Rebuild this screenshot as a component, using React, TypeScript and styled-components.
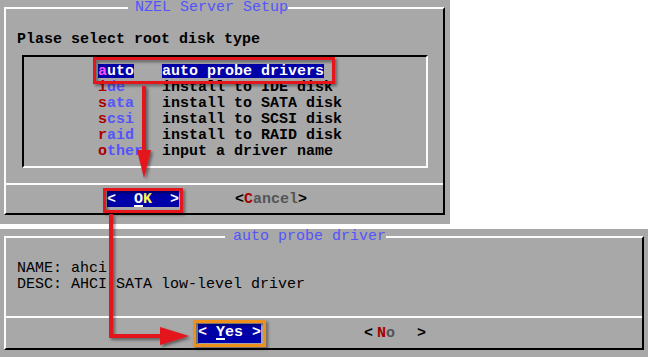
import React from "react";
import styled, { createGlobalStyle } from "styled-components";

const GRAY = "#a8a8a8";
const BLUE = "#0000a8";
const LIGHT_BLUE = "#5454fc";
const RED = "#a80000";
const WHITE = "#fcfcfc";

const GlobalStyle = createGlobalStyle`
	html, body {
		margin: 0;
		padding: 0;
		background: #ffffff;
	}
`;

const Page = styled.div`
	position: relative;
	width: 648px;
	height: 357px;
	display: flex;
	flex-direction: column;
	gap: 5px;
	background: #ffffff;
	font-family: "Liberation Mono", "DejaVu Sans Mono", monospace;
	font-size: 15px;
	overflow: hidden;
`;

const Screen = styled.div<{ $w: number; $h: number }>`
	width: ${(p) => p.$w}px;
	height: ${(p) => p.$h}px;
	box-sizing: border-box;
	padding: 7px 0 0 4px;
	background: ${GRAY};
`;

const Dialog = styled.div<{ $w: number; $h: number }>`
	width: ${(p) => p.$w}px;
	height: ${(p) => p.$h}px;
	box-sizing: border-box;
	border: 2px solid;
	border-color: ${WHITE} #000 #000 ${WHITE};
	display: flex;
	flex-direction: column;
`;

const TitleRow = styled.div<{ $left: number }>`
	margin-top: -9px;
	height: 16px;
	line-height: 16px;
	padding-left: ${(p) => p.$left}px;
	display: flex;
`;

const Title = styled.span<{ $pad: number }>`
	background: ${GRAY};
	color: ${LIGHT_BLUE};
	padding-left: ${(p) => p.$pad}px;
`;

const TextLine = styled.div<{ $bold?: boolean }>`
	height: 16px;
	line-height: 18px;
	padding-left: 11px;
	color: #000;
	font-weight: ${(p) => (p.$bold ? 700 : 400)};
	white-space: pre;
`;

const Body = styled.div`
	margin-top: 15px;
	display: flex;
	flex-direction: column;
`;

const ListBox = styled.div`
	margin: 8px 0 0 16px;
	width: 406px;
	height: 113px;
	box-sizing: border-box;
	border: 2px solid;
	border-color: #000 ${WHITE} ${WHITE} #000;
	padding-top: 6px;
	font-weight: 700;
`;

const Row = styled.div`
	display: flex;
	align-items: center;
	height: 16px;
	padding-left: 74px;
	white-space: pre;
`;

const TagCell = styled.div`
	width: 64px;
`;

const Mark = styled.span<{ $sel?: boolean }>`
	display: inline-block;
	height: 14px;
	line-height: 16px;
	background: ${(p) => (p.$sel ? BLUE : "transparent")};
	color: ${(p) => (p.$sel ? WHITE : "#000")};
`;

const Letter = styled.span<{ $c: string; $u?: boolean }>`
	color: ${(p) => p.$c};
	text-decoration: ${(p) => (p.$u ? "underline" : "none")};
	text-underline-offset: 2px;
	text-decoration-thickness: 2px;
`;

const Footer = styled.div<{ $h: number; $left: number; $gap: number }>`
	margin-top: auto;
	height: ${(p) => p.$h}px;
	border-top: 2px solid ${WHITE};
	display: flex;
	align-items: center;
	gap: ${(p) => p.$gap}px;
	padding-left: ${(p) => p.$left}px;
	font-weight: 700;
`;

const Btn = styled.div<{ $sel?: boolean; $w: number; $h: number }>`
	width: ${(p) => p.$w}px;
	height: ${(p) => p.$h}px;
	line-height: ${(p) => p.$h + 1}px;
	display: flex;
	align-items: center;
	justify-content: space-between;
	white-space: pre;
	background: ${(p) => (p.$sel ? BLUE : "transparent")};
	color: ${(p) => (p.$sel ? WHITE : "#000")};
`;

const BtnLabel = styled.span<{ $shift?: number }>`
	margin-right: ${(p) => p.$shift ?? 0}px;
`;

const Overlay = styled.svg`
	position: absolute;
	left: 0;
	top: 0;
	pointer-events: none;
`;

const items = [
	{ tag: "auto", desc: "auto probe drivers" },
	{ tag: "ide", desc: "install to IDE disk" },
	{ tag: "sata", desc: "install to SATA disk" },
	{ tag: "scsi", desc: "install to SCSI disk" },
	{ tag: "raid", desc: "install to RAID disk" },
	{ tag: "other", desc: "input a driver name" },
];

function Button(props: {
	label: string;
	w: number;
	h: number;
	sel?: boolean;
	hot: string;
	rest: string;
	underline?: boolean;
	shift?: number;
}) {
	return (
		<Btn $sel={props.sel} $w={props.w} $h={props.h}>
			<span>&lt;</span>
			<BtnLabel $shift={props.shift}>
				<Letter $c={props.hot} $u={props.underline}>
					{props.label[0]}
				</Letter>
				<Letter $c={props.rest}>{props.label.slice(1)}</Letter>
			</BtnLabel>
			<span>&gt;</span>
		</Btn>
	);
}

function Annotations() {
	const red = "#e4121c";
	return (
		<Overlay width={648} height={357} viewBox="0 0 648 357">
			<defs>
				<filter id="sh" x="-20%" y="-20%" width="140%" height="140%">
					<feDropShadow dx="2" dy="2" stdDeviation="1.5" floodColor="#000" floodOpacity="0.45" />
				</filter>
			</defs>
			<g filter="url(#sh)">
				<rect x={94.5} y={58.5} width={239} height={24} fill="none" stroke={red} strokeWidth={3} />
				<line x1={144} y1={86} x2={144} y2={156} stroke={red} strokeWidth={4} />
				<polygon points="137,150 151,150 144,178" fill={red} />
				<rect x={104.5} y={189.5} width={77} height={22} fill="none" stroke={red} strokeWidth={3} />
				<path d="M111 214 V336 H164" fill="none" stroke={red} strokeWidth={4} />
				<polygon points="160,327 160,345 189,336" fill={red} />
				<rect x={194.5} y={321.5} width={70} height={24} fill="none" stroke="#f0901e" strokeWidth={3} />
			</g>
		</Overlay>
	);
}

export default function App() {
	return (
		<>
			<GlobalStyle />
			<Page>
				<Screen $w={450} $h={224}>
					<Dialog $w={441} $h={208}>
						<TitleRow $left={122}>
							<Title $pad={7}>NZEL Server Setup</Title>
						</TitleRow>
						<Body>
							<TextLine $bold>Plase select root disk type</TextLine>
						</Body>
						<ListBox>
							{items.map((it, i) => (
								<Row key={it.tag}>
									<TagCell>
										<Mark $sel={i === 0}>
											<Letter $c={i === 0 ? "#fc54fc" : RED}>{it.tag[0]}</Letter>
											<Letter $c={i === 0 ? WHITE : LIGHT_BLUE}>{it.tag.slice(1)}</Letter>
										</Mark>
									</TagCell>
									<Mark $sel={i === 0}>{it.desc}</Mark>
								</Row>
							))}
						</ListBox>
						<Footer $h={28} $left={101} $gap={56}>
							<Button label="OK" w={72} h={16} sel hot={WHITE} rest="#fcfc54" underline />
							<Button label="Cancel" w={72} h={16} hot={RED} rest="#545454" />
						</Footer>
					</Dialog>
				</Screen>
				<Screen $w={648} $h={128}>
					<Dialog $w={640} $h={114}>
						<TitleRow $left={219}>
							<Title $pad={8}>auto probe driver</Title>
						</TitleRow>
						<Body>
							<TextLine>NAME: ahci</TextLine>
							<TextLine>DESC: AHCI SATA low-level driver</TextLine>
						</Body>
						<Footer $h={30} $left={192} $gap={103}>
							<Button label="Yes" w={63} h={19} sel hot={WHITE} rest={WHITE} underline />
							<Button label="No" w={62} h={16} hot={RED} rest="#545454" shift={18} />
						</Footer>
					</Dialog>
				</Screen>
				<Annotations />
			</Page>
		</>
	);
}
